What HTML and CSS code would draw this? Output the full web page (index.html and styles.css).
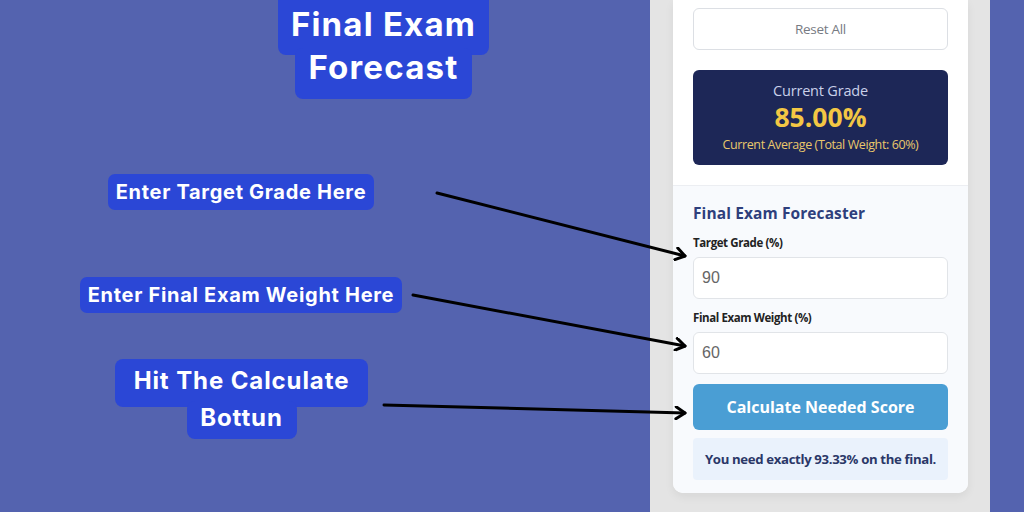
FILE: index.html
```html
<!DOCTYPE html>
<html lang="en">
<head>
<meta charset="utf-8">
<title>Final Exam Forecast</title>
<link rel="stylesheet" href="styles.css">
</head>
<body>
<div class="page">
  <section class="canvas">
    <div class="title">
      <span class="tline t1">Final Exam</span>
      <span class="tline t2">Forecast</span>
    </div>
    <div class="note note-target">Enter Target Grade Here</div>
    <div class="note note-weight">Enter Final Exam Weight Here</div>
    <div class="note-stack note-calc">
      <span class="nline n1">Hit The Calculate</span>
      <span class="nline n2">Bottun</span>
    </div>
  </section>

  <aside class="panel">
    <div class="card">
      <div class="card-top">
        <button class="reset">Reset All</button>
        <div class="grade">
          <div class="grade-label">Current Grade</div>
          <div class="grade-value">85.00%</div>
          <div class="grade-sub">Current Average (Total Weight: 60%)</div>
        </div>
      </div>
      <div class="forecast">
        <h2 class="fc-title">Final Exam Forecaster</h2>
        <label class="fc-label">Target Grade (%)</label>
        <div class="fc-input">90</div>
        <label class="fc-label">Final Exam Weight (%)</label>
        <div class="fc-input">60</div>
        <button class="calc">Calculate Needed Score</button>
        <div class="result">You need exactly 93.33% on the final.</div>
      </div>
    </div>
  </aside>

  <svg class="arrows" width="1024" height="512" viewBox="0 0 1024 512">
    <defs>
      <marker id="head" markerWidth="14" markerHeight="14" refX="11" refY="7" orient="auto" markerUnits="userSpaceOnUse">
        <path d="M2,1 L11,7 L2,13" fill="none" stroke="#000" stroke-width="3" stroke-linecap="round" stroke-linejoin="round"/>
      </marker>
    </defs>
    <line x1="437" y1="193" x2="685" y2="256" stroke="#000" stroke-width="3" stroke-linecap="round" marker-end="url(#head)"/>
    <line x1="413" y1="295" x2="685" y2="346" stroke="#000" stroke-width="3" stroke-linecap="round" marker-end="url(#head)"/>
    <line x1="384" y1="405" x2="685" y2="413" stroke="#000" stroke-width="3" stroke-linecap="round" marker-end="url(#head)"/>
  </svg>
</div>
</body>
</html>
```

FILE: styles.css
```css
* { box-sizing: border-box; }
html, body {
  margin: 0;
  padding: 0;
  width: 1024px;
  height: 512px;
  overflow: hidden;
  background: #5463af;
}
.page {
  position: relative;
  display: flex;
  width: 1024px;
  height: 512px;
}
.canvas {
  position: relative;
  width: 650px;
  flex: none;
  font-family: "Inter", "Open Sans", sans-serif;
  color: #fff;
  font-weight: 700;
}
.title {
  position: absolute;
  left: 275px;
  top: 0;
  width: 217px;
  display: flex;
  flex-direction: column;
  align-items: center;
  font-size: 33px;
  letter-spacing: 1.2px;
}
.tline {
  display: block;
  background: #2b47d6;
  border-radius: 8px;
  line-height: 38px;
  padding: 0 13px;
  white-space: nowrap;
}
.t1 { padding-top: 5px; padding-bottom: 12px; border-radius: 0 0 8px 8px; }
.t2 { margin-top: -7px; padding-top: 0; padding-bottom: 13px; }
.note {
  position: absolute;
  background: #2b47d6;
  border-radius: 7px;
  font-size: 20px;
  line-height: 36px;
  letter-spacing: 0.7px;
  white-space: nowrap;
}
.note-target { left: 108px; top: 174px; width: 266px; text-align: center; }
.note-weight { left: 80px; top: 277px; width: 322px; text-align: center; }
.note-stack {
  position: absolute;
  left: 115px;
  top: 359px;
  width: 253px;
  display: flex;
  flex-direction: column;
  align-items: center;
  font-size: 24px;
  letter-spacing: 0.9px;
}
.nline {
  display: block;
  background: #2b47d6;
  border-radius: 8px;
  line-height: 34px;
  white-space: nowrap;
}
.n1 { width: 253px; text-align: center; padding: 5px 0 9px; }
.n2 { margin-top: -6px; padding: 0 0 4px; width: 110px; text-align: center; }

.panel {
  width: 340px;
  flex: none;
  height: 512px;
  background: #e4e4e4;
  padding: 0 22px 0 23px;
  font-family: "Open Sans", "Noto Sans", sans-serif;
}
.card {
  background: #ffffff;
  border-radius: 0 0 10px 10px;
  height: 493px;
  overflow: hidden;
  box-shadow: 0 4px 10px rgba(0,0,0,0.06);
  display: flex;
  flex-direction: column;
}
.card-top {
  padding: 8px 20px 20px;
  border-bottom: 1px solid #eceef2;
  display: flex;
  flex-direction: column;
  gap: 20px;
}
.reset {
  height: 42px;
  width: 100%;
  background: #fff;
  border: 1px solid #dcdfe4;
  border-radius: 6px;
  color: #777b83;
  font-family: "Open Sans", sans-serif;
  font-size: 13.5px;
  letter-spacing: -0.3px;
}
.grade {
  background: #1d2757;
  border-radius: 6px;
  height: 95px;
  display: flex;
  flex-direction: column;
  align-items: center;
  padding-top: 12px;
}
.grade-label {
  color: #c9d1ea;
  font-size: 14.5px;
  line-height: 18px;
  letter-spacing: -0.2px;
}
.grade-value {
  color: #f3c744;
  font-size: 26.5px;
  font-weight: 700;
  line-height: 34px;
}
.grade-sub {
  color: #e9c76b;
  font-size: 12.5px;
  line-height: 18px;
  letter-spacing: -0.4px;
  margin-top: 2px;
}
.forecast {
  flex: 1;
  background: #f8fafd;
  padding: 15px 20px 0;
  display: flex;
  flex-direction: column;
}
.fc-title {
  margin: 0;
  color: #2e3f7c;
  font-size: 15.5px;
  font-weight: 700;
  line-height: 24px;
  letter-spacing: 0.1px;
}
.fc-label {
  display: block;
  margin-top: 11px;
  color: #222;
  font-size: 11.5px;
  font-weight: 700;
  line-height: 14px;
  letter-spacing: -0.4px;
}
.fc-input {
  margin-top: 7px;
  height: 42px;
  background: #fff;
  border: 1px solid #e1e4e8;
  border-radius: 6px;
  padding-left: 8px;
  display: flex;
  align-items: center;
  color: #666;
  font-family: "Liberation Sans", Arial, sans-serif;
  font-size: 16px;
}
.fc-label + .fc-input + .fc-label { margin-top: 12px; }
.calc {
  margin-top: 10px;
  height: 46px;
  width: 100%;
  border: none;
  border-radius: 6px;
  background: #4a9ed4;
  color: #fff;
  font-family: "Open Sans", sans-serif;
  font-size: 16px;
  font-weight: 700;
  letter-spacing: 0;
}
.result {
  margin-top: 8px;
  height: 42px;
  background: #eaf2fc;
  border-radius: 4px;
  display: flex;
  align-items: center;
  justify-content: center;
  color: #2a3868;
  font-size: 13.2px;
  font-weight: 700;
  letter-spacing: -0.35px;
}
.arrows {
  position: absolute;
  left: 0;
  top: 0;
  pointer-events: none;
}
```
